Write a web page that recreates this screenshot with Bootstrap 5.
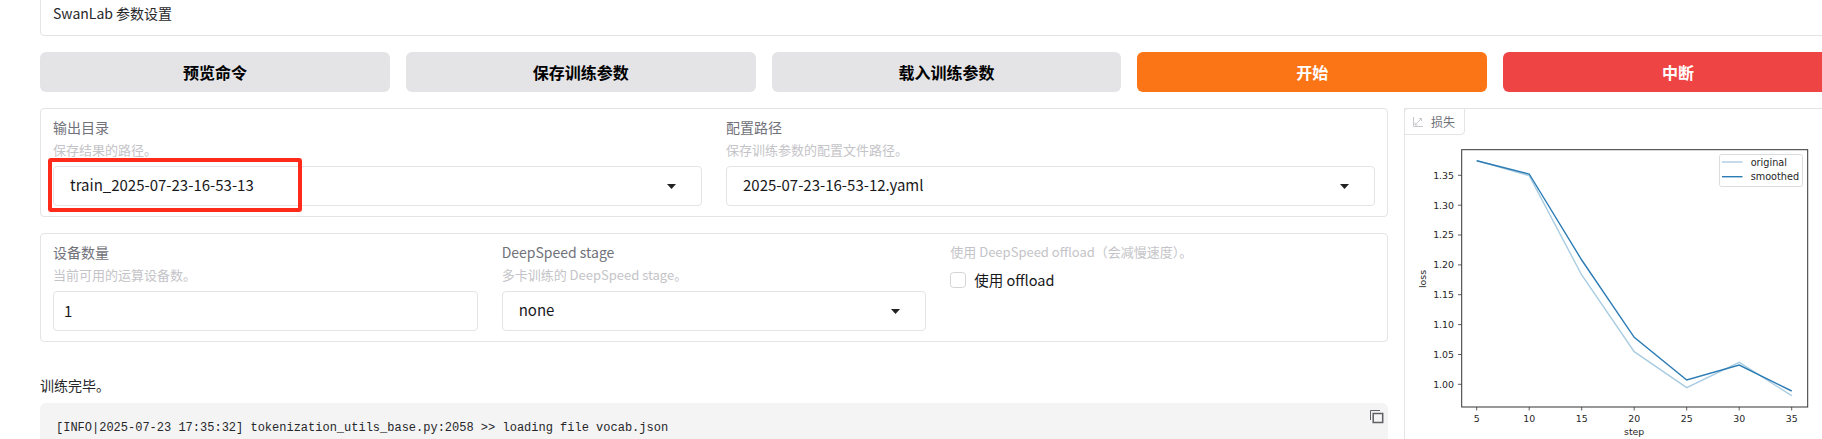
<!DOCTYPE html>
<html lang="zh">
<head>
<meta charset="utf-8">
<title>SwanLab 参数设置</title>
<link href="https://cdn.jsdelivr.net/npm/bootstrap@5.3.0/dist/css/bootstrap.min.css" rel="stylesheet">
<style>
html,body{height:439px;overflow:hidden;background:#fff}
body{font-family:"Noto Sans CJK SC","Noto Sans",sans-serif;font-size:14px;color:#27272a}
.app-shell{width:1813px;margin-left:40px}
.frame{border:1px solid #e4e4e7;border-radius:4px;background:#fff}
.top-frame{height:46px;margin-top:-10px;padding:12px 12px 0;line-height:20px;color:#27272a}
.act-btn{flex:1 1 0;height:40px;border:0;border-radius:6px;font-size:16px;font-weight:700;padding:0;background:#e4e4e7;color:#000}
.act-orange{background:#fb7516;color:#fff}
.act-red{background:#ef4444;color:#fff}
.left-col{width:1348px;flex:none}
.chart-col{width:449px;flex:none}
.form-frame{padding:8px 12px 10px}
.fld-label{font-size:14px;line-height:20px;color:#71717a}
.fld-hint{font-size:13px;line-height:18px;margin-top:4px;margin-bottom:7px;color:#c4c4c8}
.fld-hint-top{margin-top:0;line-height:20px;margin-bottom:8px}
.fld-input,.fld-select{height:40px;border:1px solid #e4e4e7;border-radius:4px;font-size:15px;color:#18181b;box-shadow:none}
.fld-input{padding:0 10px 2px}
.fld-select{padding:0 40px 2px 16px;background-size:9px 5px;background-position:right 25px center;background-image:url("data:image/svg+xml,%3Csvg xmlns='http://www.w3.org/2000/svg' viewBox='0 0 9 5'%3E%3Cpath d='M0 0h9L4.5 5z' fill='%23222'/%3E%3C/svg%3E")}
.chk-row{height:20px;gap:8px;font-size:14.5px;line-height:20px;color:#18181b}
.chk-box{width:16px;height:16px;border:1px solid #d4d4d8;border-radius:4px;margin:0;flex:none}
.done-text{margin-top:33px;line-height:20px;font-size:14px;color:#27272a}
.log-box{position:relative;margin-top:8px;height:60px;background:#f4f4f5;border-radius:6px;padding:16px 16px;font-family:"Liberation Mono",monospace;font-size:12px;line-height:18px;color:#27272a;white-space:pre}
.copy-ico{position:absolute;right:4px;top:7px;width:14px;height:14px}
.red-mark{position:absolute;left:7px;top:49px;width:254px;height:54px;border:4px solid #ff2a1a;border-radius:3px;pointer-events:none}
.chart-frame{height:340px}
.chart-tab{width:61px;height:27px;margin:-1px 0 0 -1px;border:1px solid #e4e4e7;border-radius:0 0 4px 0;font-size:12px;color:#71717a;padding-left:8px;gap:8px}
.chart-svg{display:block;font-family:"DejaVu Sans",sans-serif}
.tick-txt{font-size:9.4px;fill:#262626}
.legend-txt{font-size:9.7px;fill:#262626}
</style>
</head>
<body>
<div class="app-shell">
  <div class="frame top-frame">SwanLab 参数设置</div>
  <div class="d-flex gap-3 mt-3">
    <button class="act-btn" type="button">预览命令</button>
    <button class="act-btn" type="button">保存训练参数</button>
    <button class="act-btn" type="button">载入训练参数</button>
    <button class="act-btn act-orange" type="button">开始</button>
    <button class="act-btn act-red" type="button">中断</button>
  </div>
  <div class="d-flex gap-3 mt-3">
    <div class="left-col">
      <div class="frame form-frame position-relative">
        <div class="row gx-4">
          <div class="col-6">
            <div class="fld-label">输出目录</div>
            <div class="fld-hint">保存结果的路径。</div>
            <select class="form-select fld-select"><option>train_2025-07-23-16-53-13</option></select>
          </div>
          <div class="col-6">
            <div class="fld-label">配置路径</div>
            <div class="fld-hint">保存训练参数的配置文件路径。</div>
            <select class="form-select fld-select"><option>2025-07-23-16-53-12.yaml</option></select>
          </div>
        </div>
        <div class="red-mark"></div>
      </div>
      <div class="frame form-frame mt-3">
        <div class="row gx-4">
          <div class="col-4">
            <div class="fld-label">设备数量</div>
            <div class="fld-hint">当前可用的运算设备数。</div>
            <input class="form-control fld-input" type="text" value="1">
          </div>
          <div class="col-4">
            <div class="fld-label">DeepSpeed stage</div>
            <div class="fld-hint">多卡训练的 DeepSpeed stage。</div>
            <select class="form-select fld-select"><option>none</option></select>
          </div>
          <div class="col-4">
            <div class="fld-hint fld-hint-top">使用 DeepSpeed offload（会减慢速度）。</div>
            <label class="d-flex align-items-center chk-row"><input class="form-check-input chk-box" type="checkbox">使用 offload</label>
          </div>
        </div>
      </div>
      <div class="done-text">训练完毕。</div>
      <div class="log-box">[INFO|2025-07-23 17:35:32] tokenization_utils_base.py:2058 &gt;&gt; loading file vocab.json<svg class="copy-ico" viewBox="0 0 14 14" fill="none" stroke="#5f5f66"><path d="M.5 10V.5H10" stroke-width="1"/><rect x="3.2" y="3.5" width="9.5" height="9" stroke-width="1.5"/></svg></div>
    </div>
    <div class="chart-col frame chart-frame">
      <div class="d-flex align-items-center chart-tab">
        <svg width="10" height="10" viewBox="0 0 10 10" fill="none" stroke="#c9c9cd" stroke-width="1"><path d="M.5 0v9.5H10"/><path d="M2 8 8.5 1.5M6 1.5h2.5V4M2 5.5V8h2.5"/></svg>
        <span>损失</span>
      </div>
      <svg class="chart-svg" width="448" height="304" viewBox="1405 135 448 304" role="img" aria-label="loss chart">
        <rect x="1461.7" y="149.7" width="346" height="257.3" fill="#fff" stroke="#333" stroke-width="1"/>
        <g stroke="#333" stroke-width=".8">
          <path d="M1458 175.3h3.7M1458 205.2h3.7M1458 235h3.7M1458 264.9h3.7M1458 294.7h3.7M1458 324.6h3.7M1458 354.5h3.7M1458 384.3h3.7"/>
          <path d="M1476.7 407v3.5M1529.2 407v3.5M1581.7 407v3.5M1634.2 407v3.5M1686.7 407v3.5M1739.2 407v3.5M1791.7 407v3.5"/>
        </g>
        <g class="tick-txt" text-anchor="end">
          <text x="1454" y="178.6">1.35</text><text x="1454" y="208.5">1.30</text><text x="1454" y="238.3">1.25</text><text x="1454" y="268.2">1.20</text><text x="1454" y="298">1.15</text><text x="1454" y="327.9">1.10</text><text x="1454" y="357.8">1.05</text><text x="1454" y="387.6">1.00</text>
        </g>
        <g class="tick-txt" text-anchor="middle">
          <text x="1476.7" y="421.5">5</text><text x="1529.2" y="421.5">10</text><text x="1581.7" y="421.5">15</text><text x="1634.2" y="421.5">20</text><text x="1686.7" y="421.5">25</text><text x="1739.2" y="421.5">30</text><text x="1791.7" y="421.5">35</text>
          <text x="1634.2" y="435">step</text>
          <text transform="translate(1426 279) rotate(-90)">loss</text>
        </g>
        <polyline points="1476.7,160.7 1529.2,175.7 1581.7,275 1634.2,351.7 1686.7,387.7 1739.2,362.3 1791.7,395.7" fill="none" stroke="#a9cce1" stroke-width="1.4"/>
        <polyline points="1476.7,160.7 1529.2,174 1581.7,260 1634.2,337.3 1686.7,380 1739.2,365 1791.7,391" fill="none" stroke="#2b7bb4" stroke-width="1.4"/>
        <rect x="1719.5" y="154.5" width="83" height="32" rx="2" fill="#fff" fill-opacity=".8" stroke="#dcdcdc" stroke-width="1"/>
        <path d="M1722 162h20.5" stroke="#a9cce1" stroke-width="1.4"/>
        <path d="M1722 176.7h20.5" stroke="#2b7bb4" stroke-width="1.4"/>
        <g class="legend-txt"><text x="1750.7" y="165.5">original</text><text x="1750.7" y="180">smoothed</text></g>
      </svg>
    </div>
  </div>
</div>
</body>
</html>
